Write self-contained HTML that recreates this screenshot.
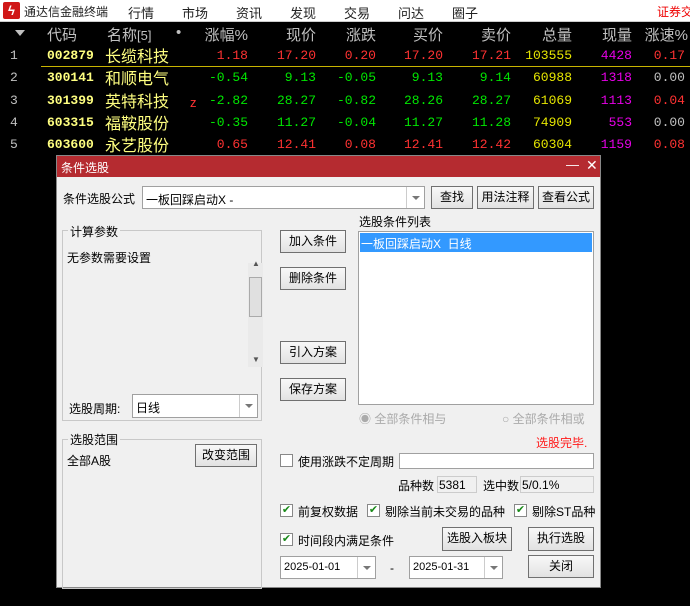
<!DOCTYPE html>
<html><head><meta charset="utf-8"><style>
*{margin:0;padding:0;box-sizing:border-box}
body{width:690px;height:606px;background:#000;position:relative;overflow:hidden;font-family:"Liberation Sans","Noto Sans CJK SC",sans-serif;font-size:12px}
.a{position:absolute;white-space:nowrap}
.menu{left:0;top:0;width:690px;height:22px;background:#fff;border-bottom:1px solid #ccc}
.m{top:3px;font-size:13px;color:#222}
.th{top:24px;font-size:15px;color:#c0c0c0}
.r{font-family:"Liberation Mono","Noto Sans CJK SC",monospace;font-size:13px;text-align:right;top:2px}
.cd{color:#ffff80;font-family:"Liberation Mono",monospace;font-size:13px;font-weight:bold;top:2px}
.nm{color:#ffff80;font-size:16px;top:-3px}
.red{color:#ff3232}.grn{color:#00e600}.yel{color:#e6e600}.mag{color:#e600e6}.gry{color:#c0c0c0}
.dlg{left:56px;top:155px;width:545px;height:433px;background:#f0f0f0;border:1px solid #888}
.btn{position:absolute;background:linear-gradient(#f8f8f8,#e2e2e2);border:1px solid #707070;text-align:center;font-size:12px;color:#000;line-height:21px}
.box{position:absolute;background:#fff;border:1px solid #a0a0a0}
.grp{position:absolute;border:1px solid #c8c8c8}
.t{position:absolute;font-size:12px;color:#000;white-space:nowrap}
.dd{position:absolute;top:0;right:0;width:18px;height:100%;border-left:1px solid #ccc}
.dd:after{content:"";position:absolute;left:5px;top:9px;border:4px solid transparent;border-top:4px solid #777}
.cb{position:absolute;width:13px;height:13px;border:1px solid #888;background:#fff;font-size:11px;color:#1a8a1a;line-height:11px;text-align:center}
</style></head><body>
<div class="a menu"></div>
<div class="a" style="left:3px;top:2px;width:17px;height:17px;background:#d01818;border-radius:2px;color:#fff;font-size:13px;line-height:17px;text-align:center;font-weight:bold">ϟ</div>
<div class="a m" style="left:24px;font-size:12px">通达信金融终端</div>
<div class="a m" style="left:128px">行情</div>
<div class="a m" style="left:182px">市场</div>
<div class="a m" style="left:236px">资讯</div>
<div class="a m" style="left:290px">发现</div>
<div class="a m" style="left:344px">交易</div>
<div class="a m" style="left:398px">问达</div>
<div class="a m" style="left:452px">圈子</div>
<div class="a m" style="left:657px;color:#e00;font-size:12px">证券交</div>

<div class="a" style="left:15px;top:30px;border:5px solid transparent;border-top:6px solid #c0c0c0"></div>
<div class="a th" style="left:47px">代码</div>
<div class="a th" style="left:107px">名称<span style="font-size:13px">[5]</span></div>
<div class="a th" style="left:176px">•</div>
<div class="a th" style="left:190px;width:58px;text-align:right">涨幅%</div>
<div class="a th" style="left:260px;width:56px;text-align:right">现价</div>
<div class="a th" style="left:320px;width:56px;text-align:right">涨跌</div>
<div class="a th" style="left:387px;width:56px;text-align:right">买价</div>
<div class="a th" style="left:455px;width:56px;text-align:right">卖价</div>
<div class="a th" style="left:516px;width:56px;text-align:right">总量</div>
<div class="a th" style="left:576px;width:56px;text-align:right">现量</div>
<div class="a th" style="left:635px;width:53px;text-align:right">涨速%</div>
<div class="a" style="left:41px;top:66px;width:649px;height:1px;background:#c8b400"></div>

<div class="a" style="left:0;top:46px;width:690px">
<div class="a gry r" style="left:10px">1</div><div class="a cd" style="left:47px">002879</div><div class="a nm" style="left:105px">长缆科技</div>
<div class="a r red" style="left:190px;width:58px">1.18</div><div class="a r red" style="left:260px;width:56px">17.20</div><div class="a r red" style="left:320px;width:56px">0.20</div><div class="a r red" style="left:387px;width:56px">17.20</div><div class="a r red" style="left:455px;width:56px">17.21</div><div class="a r yel" style="left:502px;width:70px">103555</div><div class="a r mag" style="left:576px;width:56px">4428</div><div class="a r red" style="left:635px;width:50px">0.17</div>
</div>
<div class="a" style="left:0;top:68px;width:690px">
<div class="a gry r" style="left:10px">2</div><div class="a cd" style="left:47px">300141</div><div class="a nm" style="left:105px">和顺电气</div>
<div class="a r grn" style="left:190px;width:58px">-0.54</div><div class="a r grn" style="left:260px;width:56px">9.13</div><div class="a r grn" style="left:320px;width:56px">-0.05</div><div class="a r grn" style="left:387px;width:56px">9.13</div><div class="a r grn" style="left:455px;width:56px">9.14</div><div class="a r yel" style="left:502px;width:70px">60988</div><div class="a r mag" style="left:576px;width:56px">1318</div><div class="a r gry" style="left:635px;width:50px">0.00</div>
</div>
<div class="a" style="left:0;top:91px;width:690px">
<div class="a gry r" style="left:10px">3</div><div class="a cd" style="left:47px">301399</div><div class="a nm" style="left:105px">英特科技</div><div class="a red" style="left:190px;top:4px;font-size:13px">z</div>
<div class="a r grn" style="left:190px;width:58px">-2.82</div><div class="a r grn" style="left:260px;width:56px">28.27</div><div class="a r grn" style="left:320px;width:56px">-0.82</div><div class="a r grn" style="left:387px;width:56px">28.26</div><div class="a r grn" style="left:455px;width:56px">28.27</div><div class="a r yel" style="left:502px;width:70px">61069</div><div class="a r mag" style="left:576px;width:56px">1113</div><div class="a r red" style="left:635px;width:50px">0.04</div>
</div>
<div class="a" style="left:0;top:113px;width:690px">
<div class="a gry r" style="left:10px">4</div><div class="a cd" style="left:47px">603315</div><div class="a nm" style="left:105px">福鞍股份</div>
<div class="a r grn" style="left:190px;width:58px">-0.35</div><div class="a r grn" style="left:260px;width:56px">11.27</div><div class="a r grn" style="left:320px;width:56px">-0.04</div><div class="a r grn" style="left:387px;width:56px">11.27</div><div class="a r grn" style="left:455px;width:56px">11.28</div><div class="a r yel" style="left:502px;width:70px">74909</div><div class="a r mag" style="left:576px;width:56px">553</div><div class="a r gry" style="left:635px;width:50px">0.00</div>
</div>
<div class="a" style="left:0;top:135px;width:690px">
<div class="a gry r" style="left:10px">5</div><div class="a cd" style="left:47px">603600</div><div class="a nm" style="left:105px">永艺股份</div>
<div class="a r red" style="left:190px;width:58px">0.65</div><div class="a r red" style="left:260px;width:56px">12.41</div><div class="a r red" style="left:320px;width:56px">0.08</div><div class="a r red" style="left:387px;width:56px">12.41</div><div class="a r red" style="left:455px;width:56px">12.42</div><div class="a r yel" style="left:502px;width:70px">60304</div><div class="a r mag" style="left:576px;width:56px">1159</div><div class="a r red" style="left:635px;width:50px">0.08</div>
</div>

<div class="a dlg">
<div style="position:absolute;left:0;top:0;width:543px;height:21px;background:#b52b30"></div>
<div class="t" style="left:4px;top:3px;color:#fff">条件选股</div>
<div class="t" style="left:509px;top:1px;color:#fff;font-size:13px">—</div>
<div class="t" style="left:529px;top:1px;color:#fff;font-size:14px">✕</div>

<div class="t" style="left:6px;top:34px">条件选股公式</div>
<div class="box" style="left:85px;top:30px;width:283px;height:23px"><div class="t" style="left:3px;top:4px">一板回踩启动X -</div><div class="dd"></div></div>
<div class="btn" style="left:374px;top:30px;width:42px;height:23px">查找</div>
<div class="btn" style="left:420px;top:30px;width:57px;height:23px">用法注释</div>
<div class="btn" style="left:481px;top:30px;width:56px;height:23px">查看公式</div>

<div class="grp" style="left:5px;top:74px;width:200px;height:191px"></div>
<div class="t" style="left:11px;top:67px;background:#f0f0f0;padding:0 2px">计算参数</div>
<div class="t" style="left:10px;top:93px">无参数需要设置</div>
<div style="position:absolute;left:191px;top:107px;width:15px;height:104px;background:#eaeaea"></div>
<div class="t" style="left:195px;top:103px;font-size:8px;color:#555">▲</div>
<div style="position:absolute;left:192px;top:121px;width:13px;height:40px;background:#e0e0e0;border:1px solid #aaa"></div>
<div class="t" style="left:195px;top:199px;font-size:8px;color:#555">▼</div>
<div class="t" style="left:12px;top:244px">选股周期:</div>
<div class="box" style="left:75px;top:238px;width:126px;height:24px"><div class="t" style="left:3px;top:4px">日线</div><div class="dd"></div></div>

<div class="btn" style="left:223px;top:74px;width:66px;height:23px">加入条件</div>
<div class="btn" style="left:223px;top:111px;width:66px;height:23px">删除条件</div>
<div class="btn" style="left:223px;top:185px;width:66px;height:23px">引入方案</div>
<div class="btn" style="left:223px;top:222px;width:66px;height:23px">保存方案</div>

<div class="t" style="left:302px;top:57px">选股条件列表</div>
<div class="box" style="left:301px;top:75px;width:236px;height:174px"><div style="position:absolute;left:1px;top:1px;width:232px;height:19px;background:#3399ff"></div><div class="t" style="left:2px;top:3px;color:#fff">一板回踩启动X&nbsp; 日线</div></div>
<div class="t" style="left:302px;top:254px;color:#aaa">◉ 全部条件相与</div>
<div class="t" style="left:445px;top:254px;color:#aaa">○ 全部条件相或</div>

<div class="grp" style="left:5px;top:283px;width:200px;height:150px"></div>
<div class="t" style="left:11px;top:275px;background:#f0f0f0;padding:0 2px">选股范围</div>
<div class="t" style="left:10px;top:296px">全部A股</div>
<div class="btn" style="left:138px;top:288px;width:62px;height:23px">改变范围</div>

<div class="t" style="left:479px;top:278px;color:#ff1a1a">选股完毕.</div>
<div class="cb" style="left:223px;top:298px"></div>
<div class="t" style="left:241px;top:297px">使用涨跌不定周期</div>
<div class="box" style="left:342px;top:297px;width:195px;height:16px"></div>
<div class="t" style="left:341px;top:321px">品种数</div>
<div class="box" style="left:380px;top:320px;width:40px;height:17px;background:#f0f0f0;border-color:#ccc"><div class="t" style="left:1px;top:1px">5381</div></div>
<div class="t" style="left:426px;top:321px">选中数</div>
<div class="box" style="left:463px;top:320px;width:74px;height:17px;background:#f0f0f0;border-color:#ccc"><div class="t" style="left:1px;top:1px">5/0.1%</div></div>

<div class="cb" style="left:223px;top:348px">✔</div><div class="t" style="left:241px;top:347px">前复权数据</div>
<div class="cb" style="left:310px;top:348px">✔</div><div class="t" style="left:328px;top:347px">剔除当前未交易的品种</div>
<div class="cb" style="left:457px;top:348px">✔</div><div class="t" style="left:475px;top:347px">剔除ST品种</div>
<div class="cb" style="left:223px;top:377px">✔</div><div class="t" style="left:241px;top:376px">时间段内满足条件</div>
<div class="btn" style="left:385px;top:371px;width:70px;height:24px">选股入板块</div>
<div class="btn" style="left:471px;top:371px;width:66px;height:24px">执行选股</div>
<div class="btn" style="left:471px;top:399px;width:66px;height:23px">关闭</div>
<div class="box" style="left:223px;top:400px;width:96px;height:23px"><div class="t" style="left:3px;top:4px;font-size:11px">2025-01-01</div><div class="dd"></div></div>
<div class="t" style="left:333px;top:405px">-</div>
<div class="box" style="left:352px;top:400px;width:94px;height:23px"><div class="t" style="left:3px;top:4px;font-size:11px">2025-01-31</div><div class="dd"></div></div>
</div>
</body></html>
